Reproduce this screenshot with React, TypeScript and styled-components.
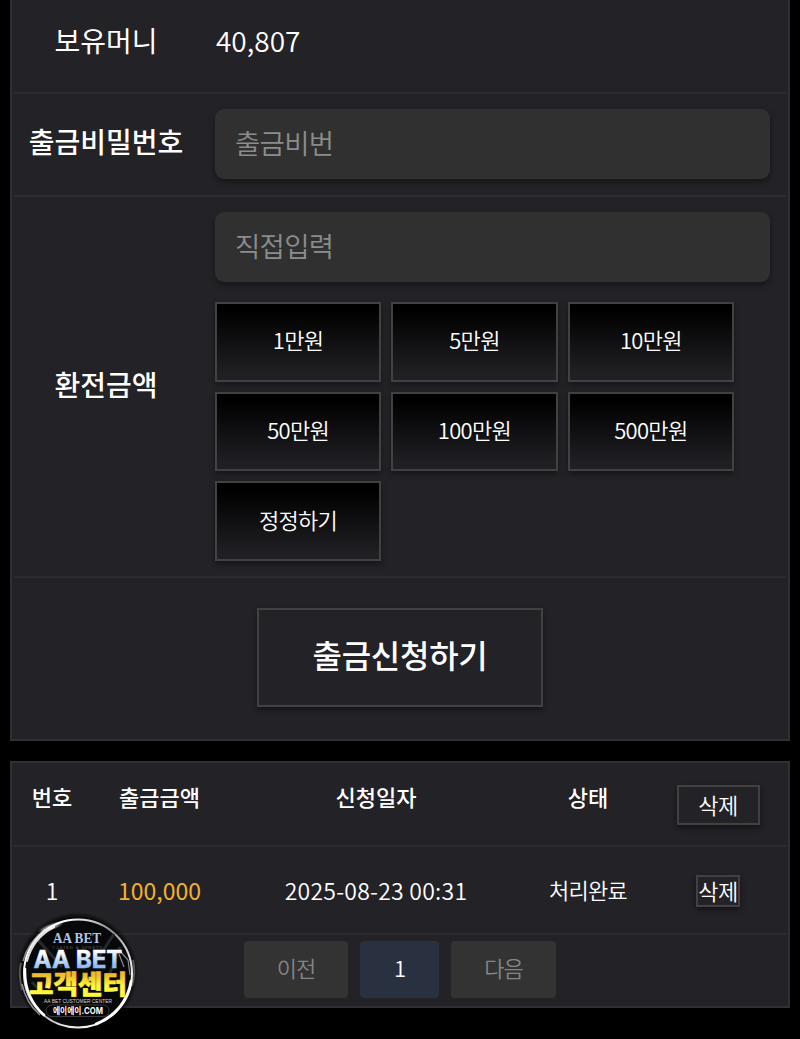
import React from 'react';
import styled, { createGlobalStyle } from 'styled-components';

const GlobalStyle = createGlobalStyle`
  * { box-sizing: border-box; }
  body {
    margin: 0;
    background: #000;
    color: #fff;
    font-family: 'Noto Sans CJK KR', 'Noto Sans', sans-serif;
    font-weight: 350;
  }
  button, input { font: inherit; color: inherit; }
`;

const Page = styled.main`
  position: relative;
  width: 800px;
  height: 1039px;
  padding: 0 10px;
  overflow: hidden;
  background: #000;
`;

const Panel = styled.section<{ $open?: boolean; $height: number }>`
  height: ${p => p.$height}px;
  padding: 0 2px;
  background: #232227;
  border: 2px solid #2f2f34;
  border-top-width: ${p => (p.$open ? 0 : 2)}px;
  & + & { margin-top: 20px; }
`;

const FormRow = styled.div<{ $height: number; $lift?: number }>`
  display: grid;
  grid-template-columns: 184px 1fr;
  align-items: center;
  height: ${p => p.$height}px;
  padding-right: 16px;
  padding-bottom: ${p => p.$lift ?? 0}px;
  border-bottom: 2px solid #2d2d31;
`;

const Label = styled.label<{ $weight?: number }>`
  padding-bottom: 5px;
  font-size: 28px;
  line-height: 40px;
  font-weight: ${p => p.$weight ?? 500};
  text-align: center;
  white-space: nowrap;
`;

const Field = styled.div`
  padding-left: 17px;
`;

const Balance = styled.div`
  padding: 0 0 4px 1px;
  font-size: 28px;
  line-height: 40px;
`;

const TextInput = styled.input`
  display: block;
  width: 555px;
  height: 70px;
  padding: 0 20px 4px;
  border: 0;
  border-radius: 9px;
  background: #303030;
  box-shadow: 0 3px 6px rgba(0, 0, 0, 0.4);
  font-size: 27.5px;
  letter-spacing: -0.7px;
  outline: 0;
  &::placeholder { color: #8c8c8c; opacity: 1; }
`;

const AmountGrid = styled.div`
  display: grid;
  grid-template-columns: repeat(3, 166.2px);
  grid-auto-rows: 79.4px;
  gap: 10.2px;
  margin-top: 20px;
`;

const AmountButton = styled.button`
  padding: 0 0 5px;
  border: 2px solid #414141;
  background: linear-gradient(#000 8%, #202024 92%);
  box-shadow: 0 3px 6px rgba(0, 0, 0, 0.4);
  font-size: 22px;
  letter-spacing: -0.7px;
`;

const SubmitArea = styled.div`
  display: flex;
  justify-content: center;
  padding-top: 30px;
`;

const SubmitButton = styled.button`
  width: 286px;
  height: 99px;
  padding: 0 0 8px;
  border: 2px solid #414141;
  background: #232227;
  box-shadow: 0 3px 6px rgba(0, 0, 0, 0.45);
  font-size: 32px;
  font-weight: 500;
  letter-spacing: -0.3px;
`;

const TableRow = styled.div<{ $height: number; $head?: boolean }>`
  display: grid;
  grid-template-columns: 76px 139px 294px 130px 130px;
  align-items: center;
  justify-items: center;
  height: ${p => p.$height}px;
  border-bottom: 2px solid #2d2d31;
  font-size: 22px;
  line-height: 32px;
  font-weight: ${p => (p.$head ? 500 : 350)};
`;

const Cell = styled.span<{ $lift?: number; $size?: number; $spacing?: number; $gold?: boolean }>`
  padding-bottom: ${p => p.$lift ?? 0}px;
  font-size: ${p => p.$size ?? 22}px;
  letter-spacing: ${p => p.$spacing ?? 0}px;
  color: ${p => (p.$gold ? '#f5b22f' : '#fff')};
  font-weight: ${p => (p.$gold ? 400 : 'inherit')};
  white-space: nowrap;
`;

const DeleteButton = styled.button<{ $wide?: boolean }>`
  display: flex;
  align-items: center;
  justify-content: center;
  width: ${p => (p.$wide ? 83 : 44)}px;
  height: ${p => (p.$wide ? 40 : 32)}px;
  padding: 0 0 3px;
  margin-top: 2px;
  border: 2px solid #414141;
  background: #232227;
  box-shadow: 0 3px 6px rgba(0, 0, 0, 0.45);
  font-size: 22px;
  font-weight: 350;
  letter-spacing: -0.6px;
  white-space: nowrap;
`;

const Pager = styled.nav`
  display: flex;
  justify-content: center;
  gap: 12px;
  padding-top: 6px;
`;

const PageButton = styled.button<{ $width: number; $active?: boolean }>`
  width: ${p => p.$width}px;
  height: 57px;
  padding: 0 0 6px;
  border: 0;
  border-radius: 4px;
  background: ${p => (p.$active ? '#293040' : '#333334')};
  color: ${p => (p.$active ? '#fff' : '#858585')};
  font-size: 22px;
  letter-spacing: -0.9px;
`;

const SupportBadge = styled.a`
  position: absolute;
  left: 16px;
  top: 912px;
  width: 122px;
  height: 122px;
  svg { display: block; }
`;

const amounts = ['1만원', '5만원', '10만원', '50만원', '100만원', '500만원', '정정하기'];

function SupportLogo() {
  return (
    <svg width="122" height="122" viewBox="0 0 122 122" aria-label="AA BET 고객센터">
      <defs>
        <linearGradient id="ring" x1="0" y1="0" x2="1" y2="1">
          <stop offset="0" stopColor="#d8d8d8" />
          <stop offset="0.2" stopColor="#fff" />
          <stop offset="0.45" stopColor="#8f8f8f" />
          <stop offset="0.65" stopColor="#e0e0e0" />
          <stop offset="0.85" stopColor="#fff" />
          <stop offset="1" stopColor="#777" />
        </linearGradient>
        <linearGradient id="ice" x1="0" y1="0" x2="0.15" y2="1">
          <stop offset="0.3" stopColor="#fff" />
          <stop offset="0.8" stopColor="#8fbcf0" />
        </linearGradient>
        <linearGradient id="gold" x1="0" y1="0" x2="0" y2="1">
          <stop offset="0.3" stopColor="#f0b92b" />
          <stop offset="0.6" stopColor="#fff83e" />
        </linearGradient>
        <radialGradient id="flare">
          <stop offset="0" stopColor="#fff" />
          <stop offset="1" stopColor="#fff" stopOpacity="0" />
        </radialGradient>
        <radialGradient id="halo">
          <stop offset="0.88" stopColor="#000" />
          <stop offset="1" stopColor="#000" stopOpacity="0" />
        </radialGradient>
      </defs>
      <circle cx="61" cy="61" r="61" fill="url(#halo)" />
      <path d="M5 51Q2 60 6 78M117 48Q120 61 116 74" fill="none" stroke="#555" strokeWidth="2" />
      <path d="M7 49Q12 30 29 17M6 72Q10 91 24 103" fill="none" stroke="#8d8d8d" strokeWidth="1.5" />
      <circle cx="62" cy="61.5" r="54" fill="#07080a" stroke="url(#ring)" strokeWidth="2" />
      <path d="M22 28L46 55M98 22L82 46M16 70L27 82M104 35L92 66" stroke="#26282c" strokeWidth="3" />
      <path d="M104 39L112 48L114 63M103 42L108 55" fill="none" stroke="#8a8c90" strokeWidth="1.2" />
      <path d="M9 57Q8 85 28 103M115 69Q110 99 80 112" fill="none" stroke="#fff" strokeWidth="2.6" strokeLinecap="round" />
      <path d="M11 49Q17 26 38 15" fill="none" stroke="#ddd" strokeWidth="2" strokeLinecap="round" />
      <ellipse cx="35" cy="15" rx="14" ry="3.6" fill="url(#flare)" transform="rotate(-20 35 15)" />
      <text x="61" y="31" textAnchor="middle" textLength="48" lengthAdjust="spacingAndGlyphs" fontFamily="Liberation Serif" fontSize="14" fontWeight="700" fill="#b3c6e6">AA BET</text>
      <text x="61" y="37" textAnchor="middle" textLength="49" fontFamily="Liberation Serif" fontSize="3.8" fill="#707070">CASINO &amp; SPORTS</text>
      <text x="62" y="82" textAnchor="middle" textLength="98" lengthAdjust="spacingAndGlyphs" fontFamily="Noto Sans CJK KR" fontSize="26" fontWeight="900" fill="url(#gold)" stroke="url(#gold)" strokeWidth="0.6">고객센터</text>
      <text x="62" y="56" textAnchor="middle" textLength="89" lengthAdjust="spacingAndGlyphs" fontFamily="Inter, Liberation Sans" fontSize="24" fontWeight="700" fill="url(#ice)" stroke="url(#ice)" strokeWidth="0.5">AA BET</text>
      <text x="62" y="91" textAnchor="middle" textLength="68" lengthAdjust="spacingAndGlyphs" fontFamily="Liberation Sans" fontSize="6" fill="#d5d5d5">AA BET CUSTOMER CENTER</text>
      <rect x="30" y="93" width="63" height="11.5" rx="5.7" fill="#030303" stroke="#555" strokeWidth="0.7" />
      <text x="62" y="101.8" textAnchor="middle" textLength="50" lengthAdjust="spacingAndGlyphs" fontFamily="Inter, Noto Sans CJK KR" fontSize="8.8" fontWeight="700" fill="#fff">에이에이.COM</text>
    </svg>
  );
}

export default function App() {
  return (
    <>
      <GlobalStyle />
      <Page>
        <Panel $open $height={741}>
          <FormRow $height={94} $lift={8}>
            <Label $weight={400}>보유머니</Label>
            <Field><Balance>40,807</Balance></Field>
          </FormRow>
          <FormRow $height={103} $lift={2}>
            <Label>출금비밀번호</Label>
            <Field><TextInput placeholder="출금비번" /></Field>
          </FormRow>
          <FormRow $height={381}>
            <Label>환전금액</Label>
            <Field>
              <TextInput placeholder="직접입력" />
              <AmountGrid>
                {amounts.map(amount => <AmountButton key={amount}>{amount}</AmountButton>)}
              </AmountGrid>
            </Field>
          </FormRow>
          <SubmitArea><SubmitButton>출금신청하기</SubmitButton></SubmitArea>
        </Panel>
        <Panel $height={247}>
          <TableRow $height={84} $head>
            <Cell $lift={16}>번호</Cell>
            <Cell $lift={16}>출금금액</Cell>
            <Cell $lift={16}>신청일자</Cell>
            <Cell $lift={16}>상태</Cell>
            <DeleteButton $wide>삭제</DeleteButton>
          </TableRow>
          <TableRow $height={88}>
            <Cell $size={23}>1</Cell>
            <Cell $size={23} $gold>100,000</Cell>
            <Cell $size={23} $spacing={0.25}>2025-08-23 00:31</Cell>
            <Cell $lift={2} $spacing={-0.7}>처리완료</Cell>
            <DeleteButton>삭제</DeleteButton>
          </TableRow>
          <Pager>
            <PageButton $width={104}>이전</PageButton>
            <PageButton $width={79} $active>1</PageButton>
            <PageButton $width={105}>다음</PageButton>
          </Pager>
        </Panel>
        <SupportBadge><SupportLogo /></SupportBadge>
      </Page>
    </>
  );
}
